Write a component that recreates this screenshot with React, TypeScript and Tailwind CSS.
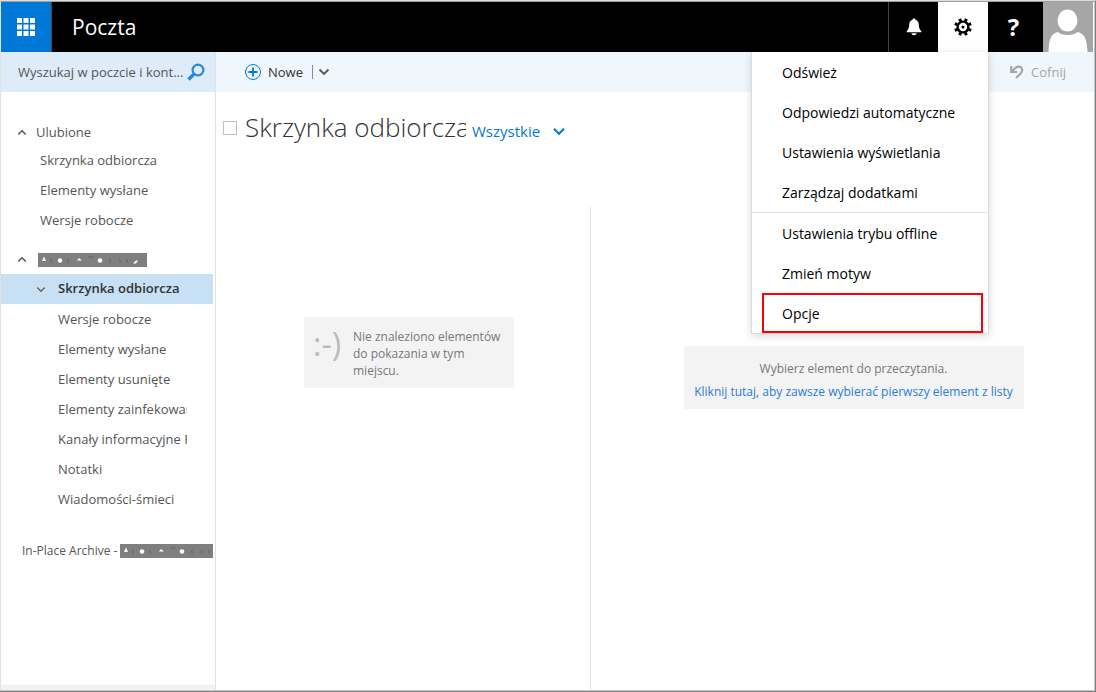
import { clsx } from 'clsx';

const favorites = ['Skrzynka odbiorcza', 'Elementy wysłane', 'Wersje robocze'];

const folders = [
  'Wersje robocze',
  'Elementy wysłane',
  'Elementy usunięte',
  'Elementy zainfekowane',
  'Kanały informacyjne RSS',
  'Notatki',
  'Wiadomości-śmieci',
];

const menuGroups = [
  ['Odśwież', 'Odpowiedzi automatyczne', 'Ustawienia wyświetlania', 'Zarządzaj dodatkami'],
  ['Ustawienia trybu offline', 'Zmień motyw', 'Opcje'],
];

function Chevron({ up = false, className }: { up?: boolean; className?: string }) {
  return (
    <svg viewBox="0 0 12 8" className={className} fill="none" stroke="currentColor" strokeWidth="1.8" aria-hidden="true">
      <path d={up ? 'M1.5 6.5 6 2l4.5 4.5' : 'M1.5 1.5 6 6l4.5-4.5'} />
    </svg>
  );
}

function WaffleIcon() {
  return (
    <svg viewBox="0 0 18 18" className="size-[18px]" fill="currentColor" aria-hidden="true">
      {[0, 6.5, 13].map((y) => [0, 6.5, 13].map((x) => <rect key={`${x}-${y}`} x={x} y={y} width="5" height="5" />))}
    </svg>
  );
}

function SearchIcon() {
  return (
    <svg viewBox="0 0 18 18" className="size-[18px] shrink-0" fill="none" stroke="currentColor" aria-hidden="true">
      <circle cx="11" cy="7" r="5.4" strokeWidth="2.2" />
      <path d="M7 11 1.5 16.5" strokeWidth="3.4" />
    </svg>
  );
}

function BellIcon() {
  return (
    <svg viewBox="0 0 16 18" className="h-[18px] w-4" fill="currentColor" aria-hidden="true">
      <path d="M8 .5c.9 0 1.4.5 1.5 1.3 2.2.7 3.2 2.5 3.3 4.8.1 3.6.8 5.2 2.5 6.5v1.2H.7v-1.2c1.7-1.3 2.4-2.9 2.5-6.5.1-2.3 1.1-4.1 3.3-4.8C6.6 1 7.1.5 8 .5z" />
      <path d="M5.3 15.3h5.4c-.3 1.2-1.3 2-2.7 2s-2.4-.8-2.7-2z" />
    </svg>
  );
}

function GearIcon() {
  return (
    <svg viewBox="0 0 18 18" className="size-[18px]" fill="none" stroke="currentColor" aria-hidden="true">
      <circle cx="9" cy="9" r="5.4" strokeWidth="2.4" />
      <circle cx="9" cy="9" r="1.5" fill="currentColor" stroke="none" />
      {[22.5, 67.5, 112.5, 157.5, 202.5, 247.5, 292.5, 337.5].map((angle) => (
        <path key={angle} d="M9 3V.2" strokeWidth="3" transform={`rotate(${angle} 9 9)`} />
      ))}
    </svg>
  );
}

function UndoIcon() {
  return (
    <svg viewBox="0 0 14 14" className="size-[14px]" fill="none" stroke="currentColor" strokeWidth="2.2" aria-hidden="true">
      <path d="M1.2 1v6h6" />
      <path d="M1.6 6.6 5.5 2.9C7.8.9 11.2 1.3 12 4c.5 1.8-.1 3.2-1.3 4.5L6 13" />
    </svg>
  );
}

function Avatar() {
  return (
    <svg viewBox="0 0 50 50" className="size-full" fill="#fff" aria-hidden="true">
      <ellipse cx="24.5" cy="18.5" rx="10" ry="11" />
      <path d="M5.5 50c.3-13 2.5-18.5 9.5-20 3 4 16 4 19.5 0 7 1.5 9.5 7 10 20z" />
    </svg>
  );
}

// Mailbox owner name is masked with a solid bar
function MaskedName({ className }: { className?: string }) {
  return (
    <svg viewBox="0 0 109 14" preserveAspectRatio="xMinYMid slice" className={clsx('h-[14px]', className)} role="img" aria-label="Nazwa ukryta">
      <rect width="109" height="14" fill="#7f7f7f" />
      <g fill="#fff">
        <path d="M4 8 6 3.5 8 8z" />
        <circle cx="22" cy="7.5" r="2.2" />
        <path d="M39 7.5 41 5l3 2.5z" />
        <circle cx="62" cy="7.5" r="2.3" />
        <path d="M95 10.5 98 7.5h2l-2 3z" />
      </g>
      <path d="M13 6v4M30 6v4M50 4h6M72 6v4M82 6v4M89 6v4" stroke="#6f6f74" strokeWidth="1.5" />
    </svg>
  );
}

function Header() {
  return (
    <header className="mr-px flex h-[50px] shrink-0 bg-black text-white">
      <button aria-label="Uruchamianie aplikacji" className="flex w-[51px] items-center justify-center border-r border-[#444] bg-[#0078d7]">
        <WaffleIcon />
      </button>
      <h1 className="flex flex-1 items-center pl-5 text-[21px] leading-none">Poczta</h1>
      <button aria-label="Powiadomienia" className="flex w-[50px] items-center justify-center border-l border-[#444]">
        <BellIcon />
      </button>
      <div className="relative w-[50px]">
        <button aria-label="Ustawienia" aria-expanded="true" className="flex size-full items-center justify-center bg-white text-black">
          <GearIcon />
        </button>
        <SettingsMenu />
      </div>
      <button aria-label="Pomoc" className="w-[55px] pr-1 text-[24px] leading-none font-bold">
        ?
      </button>
      <button aria-label="Konto" className="w-[50px] bg-[#a6a6a6]">
        <Avatar />
      </button>
    </header>
  );
}

function SettingsMenu() {
  return (
    <div className="absolute top-full -right-px z-10 w-[238px] border border-t-0 border-[#dcdcdc] bg-white text-[14px] text-black shadow-[0_2px_8px_rgba(0,0,0,0.15)]">
      {menuGroups.map((group, i) => (
        <ul key={i} className={clsx(i > 0 && 'border-t border-[#e6e6e6]')}>
          {group.map((label) => (
            <li key={label} className="flex h-10">
              <button
                className={clsx(
                  'flex-1 text-left',
                  label === 'Opcje' ? 'mr-[5px] ml-[10px] border-2 border-[#f00] pl-[18px]' : 'pl-[30px]',
                )}
              >
                {label}
              </button>
            </li>
          ))}
        </ul>
      ))}
    </div>
  );
}

function Sidebar() {
  return (
    <aside className="flex w-[215px] shrink-0 flex-col border-r border-[#e1e1e1]">
      <div className="flex h-10 shrink-0 items-center bg-[#deebf8] pr-[10px] pl-[17px] text-[#2b88d8]">
        <input
          type="text"
          aria-label="Wyszukaj"
          placeholder="Wyszukaj w poczcie i kont..."
          className="min-w-0 flex-1 pt-px text-[13px] text-[#333] outline-none placeholder:text-[#555]"
        />
        <SearchIcon />
      </div>

      <nav className="flex-1 pt-[27px] text-[13px] text-[#555]">
        <button className="flex h-[27px] items-center pl-4">
          <Chevron up className="mr-[9px] h-[7px] w-[10px]" />
          Ulubione
        </button>
        <ul>
          {favorites.map((name) => (
            <li key={name}>
              <a href="#" className="flex h-[30px] items-center pl-[39px]">{name}</a>
            </li>
          ))}
        </ul>

        <button className="mt-[9px] flex h-[29px] items-center pl-4">
          <Chevron up className="mr-[11px] h-[7px] w-[10px]" />
          <MaskedName className="w-[109px]" />
        </button>
        <a href="#" className="mr-[2px] flex h-[30px] items-center bg-[#c7e0f4] pl-[35px] font-semibold text-[#333]">
          <Chevron className="mr-[12px] h-[7px] w-[10px] text-[#666]" />
          Skrzynka odbiorcza
        </a>
        <ul>
          {folders.map((name) => (
            <li key={name}>
              <a href="#" className="mr-[28px] ml-[57px] block h-[30px] overflow-hidden leading-[30px] whitespace-nowrap">{name}</a>
            </li>
          ))}
        </ul>

        <a href="#" className="mt-[22px] mr-[2px] flex h-[30px] items-center overflow-hidden pl-[21px] text-[12px] whitespace-nowrap">
          In-Place Archive -
          <MaskedName className="ml-[3px] min-w-0 flex-1" />
        </a>
      </nav>
      <div className="h-[5px] bg-[#f2f2f2]" />
    </aside>
  );
}

function Toolbar() {
  return (
    <div className="flex h-10 shrink-0 items-center justify-between bg-[#eff6fc] pr-7 pl-[29px] text-[13px]">
      <div className="flex items-center text-[#333]">
        <button className="flex items-center gap-[7px]">
          <svg viewBox="0 0 16 16" className="size-4 text-[#0078d7]" fill="none" stroke="currentColor" aria-hidden="true">
            <circle cx="8" cy="8" r="7.5" />
            <path d="M8 3.5v9M3.5 8h9" strokeWidth="1.8" />
          </svg>
          <span className="pt-[2px]">Nowe</span>
        </button>
        <span className="ml-[9px] h-[14px] w-px bg-[#8a8a9a]" />
        <button aria-label="Więcej opcji" className="ml-[5px] text-[#555]">
          <Chevron className="h-[8px] w-3" />
        </button>
      </div>
      <button disabled className="flex items-center gap-[7px] text-[#a6a6a6]">
        <UndoIcon />
        <span className="pt-[2px]">Cofnij</span>
      </button>
    </div>
  );
}

function MessageList() {
  return (
    <section className="flex w-[375px] shrink-0 flex-col">
      <div className="flex h-[115px] items-start pt-[15px] pl-[7px]">
        <input type="checkbox" aria-label="Zaznacz wszystko" className="mt-[14px] size-[14px] shrink-0 appearance-none border border-[#c0c0c0]" />
        <h2 className="ml-2 w-[221px] overflow-hidden text-[26px] leading-[40px] font-light whitespace-nowrap text-[#333]">
          Skrzynka odbiorcza
        </h2>
        <button className="ml-[6px] flex items-center gap-3 pt-[13px] text-[15px] leading-[22px] text-[#0078d7]">
          Wszystkie
          <Chevron className="h-[9px] w-[14px]" />
        </button>
      </div>
      <div className="flex-1 border-r border-[#e1e1e1] pt-[110px] pl-[88px]">
        <div className="flex w-[210px] bg-[#f3f3f3] pt-[11px] pr-2 pb-[9px] pl-[9px]">
          <span className="w-10 shrink-0 text-[32px] leading-[32px] text-[#bbb]">:-)</span>
          <p className="text-[12px] leading-[17px] text-[#777]">Nie znaleziono elementów do pokazania w tym miejscu.</p>
        </div>
      </div>
    </section>
  );
}

function ReadingPane() {
  return (
    <section className="flex flex-1 items-start justify-center pt-[254px] pl-[22px]">
      <div className="w-[340px] bg-[#f3f3f3] pt-[11px] pb-[6px] text-center text-[12px] leading-[23px] whitespace-nowrap">
        <p className="text-[#777]">Wybierz element do przeczytania.</p>
        <a href="#" className="block text-[#2b7cd3]">Kliknij tutaj, aby zawsze wybierać pierwszy element z listy</a>
      </div>
    </section>
  );
}

export default function App() {
  return (
    <div className="flex h-screen flex-col border-t border-r border-b border-t-[#dcdcdc] border-r-[#808080] border-b-[#808080] bg-white font-['Open_Sans','Noto_Sans',sans-serif]">
      <div className="flex min-h-0 flex-1 flex-col border border-[#e1e1e1] border-t-[#a0a0a0] border-r-[#c8c8c8] border-b-[#c8c8c8]">
        <Header />
        <div className="flex min-h-0 flex-1">
          <Sidebar />
          <main className="flex min-w-0 flex-1 flex-col">
            <Toolbar />
            <div className="flex min-h-0 flex-1">
              <MessageList />
              <ReadingPane />
            </div>
          </main>
        </div>
      </div>
    </div>
  );
}
